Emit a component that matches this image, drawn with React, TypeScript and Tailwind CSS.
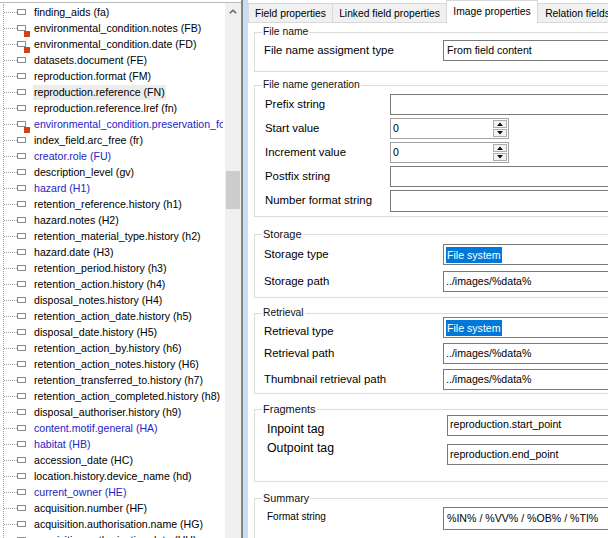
import React from 'react';

type TreeNode = { label: string; blue?: boolean; red?: boolean; hl?: boolean };

const nodes: TreeNode[] = [
  { label: 'finding_aids (fa)' },
  { label: 'environmental_condition.notes (FB)', red: true },
  { label: 'environmental_condition.date (FD)', red: true },
  { label: 'datasets.document (FE)' },
  { label: 'reproduction.format (FM)' },
  { label: 'reproduction.reference (FN)', hl: true },
  { label: 'reproduction.reference.lref (fn)' },
  { label: 'environmental_condition.preservation_form (FO)', blue: true, red: true },
  { label: 'index_field.arc_free (fr)' },
  { label: 'creator.role (FU)', blue: true },
  { label: 'description_level (gv)' },
  { label: 'hazard (H1)', blue: true },
  { label: 'retention_reference.history (h1)' },
  { label: 'hazard.notes (H2)' },
  { label: 'retention_material_type.history (h2)' },
  { label: 'hazard.date (H3)' },
  { label: 'retention_period.history (h3)' },
  { label: 'retention_action.history (h4)' },
  { label: 'disposal_notes.history (H4)' },
  { label: 'retention_action_date.history (h5)' },
  { label: 'disposal_date.history (H5)' },
  { label: 'retention_action_by.history (h6)' },
  { label: 'retention_action_notes.history (H6)' },
  { label: 'retention_transferred_to.history (h7)' },
  { label: 'retention_action_completed.history (h8)' },
  { label: 'disposal_authoriser.history (h9)' },
  { label: 'content.motif.general (HA)', blue: true },
  { label: 'habitat (HB)', blue: true },
  { label: 'accession_date (HC)' },
  { label: 'location.history.device_name (hd)' },
  { label: 'current_owner (HE)', blue: true },
  { label: 'acquisition.number (HF)' },
  { label: 'acquisition.authorisation.name (HG)' },
  { label: 'acquisition.authorisation.date (HH)' },
];

const TreeRow = ({ node }: { node: TreeNode }) => (
  <div className="flex h-[16px] shrink-0 items-center whitespace-nowrap">
    <span className="w-[13px] shrink-0 border-t border-dotted border-[#a0a0a0]" />
    <span className="relative h-[6px] w-[9px] shrink-0 border border-[#8c8c8c]">
      {node.red && <span className="absolute left-[6px] top-[5px] h-[6px] w-[6px] bg-[#d9401a]" />}
    </span>
    <span
      className={`ml-[7px] px-[1px] text-[10.6px] leading-[15px] ${node.hl ? 'bg-[#ececec]' : ''} ${
        node.blue ? 'text-[#2424c4]' : 'text-black'
      }`}
    >
      {node.label}
    </span>
  </div>
);

const Field = ({ children, className = '' }: { children?: React.ReactNode; className?: string }) => (
  <div className={`flex h-[21px] w-[220px] shrink-0 items-center border border-[#7a7a7a] pl-[2px] text-[10.6px] whitespace-nowrap ${className}`}>
    {children}
  </div>
);

const Selected = ({ children }: { children: React.ReactNode }) => (
  <span className="bg-[#0078d7] px-[1px] leading-[16px] text-white">{children}</span>
);

const Spin = ({ value }: { value: string }) => (
  <div className="flex h-[21px] w-[119px] shrink-0 border border-[#a2a2a2] text-[10.6px]">
    <div className="flex flex-1 items-center pl-[2px]">{value}</div>
    <div className="flex w-[15px] flex-col gap-[1px] py-[1px] pr-[1px]">
      <div className="flex flex-1 items-center justify-center border border-[#acacac] bg-[#f3f3f3]">
        <svg width="6" height="4" viewBox="0 0 6 4">
          <path d="M0 4 L3 0.5 L6 4 Z" fill="#111" />
        </svg>
      </div>
      <div className="flex flex-1 items-center justify-center border border-[#acacac] bg-[#f3f3f3]">
        <svg width="6" height="4" viewBox="0 0 6 4">
          <path d="M0 0 L3 3.5 L6 0 Z" fill="#111" />
        </svg>
      </div>
    </div>
  </div>
);

const Group = ({
  title,
  titleCls,
  className,
  children,
}: {
  title: string;
  titleCls: string;
  className: string;
  children: React.ReactNode;
}) => (
  <fieldset className={`ml-[6px] w-[400px] border border-[#dcdcdc] ${className}`}>
    <legend className={`ml-[7px] px-[1px] leading-[14px] text-[#111] ${titleCls}`}>{title}</legend>
    {children}
  </fieldset>
);

const App: React.FC = () => {
  return (
    <div className="flex h-[538px] w-[608px] overflow-hidden bg-white font-['Liberation_Sans',Arial,sans-serif] text-black">
      {/* field tree */}
      <div className="mt-[2px] flex h-[536px] shrink-0 border-t border-[#b9b9b9]">
        <div className="w-[223px] overflow-hidden pt-[1px]">
          <div className="ml-[3px] flex h-full flex-col border-l border-dotted border-[#a0a0a0]">
            {nodes.map((n) => (
              <TreeRow key={n.label} node={n} />
            ))}
          </div>
        </div>
        <div className="ml-[2px] flex w-[16px] flex-col bg-[#f0f0f0]">
          <div className="flex h-[17px] items-center justify-center">
            <svg width="8" height="5" viewBox="0 0 8 5">
              <path d="M0.8 4.3 L4 1.2 L7.2 4.3" fill="none" stroke="#606060" strokeWidth="1.5" />
            </svg>
          </div>
          <div className="mx-auto mt-[151px] h-[38px] w-[14px] bg-[#cdcdcd]" />
        </div>
      </div>

      {/* splitter */}
      <div className="w-[2px] shrink-0 bg-[#858585]" />
      <div className="w-[5px] shrink-0 bg-[#c6dcf7]" />

      {/* properties */}
      <div className="min-w-0 flex-1 overflow-hidden">
        <div className="flex h-[23px] items-end border-b border-[#d9d9d9] text-[10.3px] whitespace-nowrap">
          <div className="flex h-[19px] w-[84px] shrink-0 justify-center border-l border-t border-[#d9d9d9] bg-[#f0f0f0] pt-[4px] leading-[12px]">
            Field properties
          </div>
          <div className="flex h-[19px] w-[114px] shrink-0 justify-center border-l border-t border-[#d9d9d9] bg-[#f0f0f0] pt-[4px] leading-[12px]">
            Linked field properties
          </div>
          <div className="relative z-10 -mb-px flex h-[23px] w-[92px] shrink-0 justify-center border-x border-t border-[#d9d9d9] bg-white pt-[5px] leading-[12px]">
            Image properties
          </div>
          <div className="flex h-[19px] w-[80px] shrink-0 justify-center border-t border-r border-[#d9d9d9] bg-[#f0f0f0] pt-[4px] leading-[12px]">
            Relation fields
          </div>
        </div>

        <Group title="File name" titleCls="text-[10.3px]" className="mt-[2px] pb-[10px]">
          <div className="mt-[1px] flex h-[21px] items-center pl-[9px]">
            <div className="w-[179px] shrink-0 text-[11.4px]">File name assigment type</div>
            <Field className="pl-[3px]">From field content</Field>
          </div>
        </Group>

        <Group title="File name generation" titleCls="text-[10.3px]" className="mt-[6px] pb-[5px]">
          <div className="mt-[2px] flex flex-col gap-[3px] pl-[10px] text-[11.4px]">
            <div className="flex h-[21px] items-center">
              <div className="w-[125px] shrink-0">Prefix string</div>
              <Field />
            </div>
            <div className="flex h-[21px] items-center">
              <div className="w-[125px] shrink-0">Start value</div>
              <Spin value="0" />
            </div>
            <div className="flex h-[21px] items-center">
              <div className="w-[125px] shrink-0">Increment value</div>
              <Spin value="0" />
            </div>
            <div className="flex h-[21px] items-center">
              <div className="w-[125px] shrink-0">Postfix string</div>
              <Field />
            </div>
            <div className="flex h-[21px] items-center">
              <div className="w-[125px] shrink-0">Number format string</div>
              <Field className="h-[22px]" />
            </div>
          </div>
        </Group>

        <Group title="Storage" titleCls="text-[11px]" className="mt-[10px] pb-[5px]">
          <div className="mt-[3px] flex flex-col gap-[6px] pl-[9px] text-[11.4px]">
            <div className="flex h-[21px] items-center">
              <div className="w-[179px] shrink-0">Storage type</div>
              <Field>
                <Selected>File system</Selected>
              </Field>
            </div>
            <div className="flex h-[21px] items-center">
              <div className="w-[179px] shrink-0">Storage path</div>
              <Field>../images/%data%</Field>
            </div>
          </div>
        </Group>

        <Group title="Retrieval" titleCls="text-[10.3px]" className="mt-[8px] pb-[3px]">
          <div className="-mt-[3px] flex flex-col gap-[5px] pl-[9px] text-[11.4px]">
            <div className="flex h-[21px] items-center">
              <div className="mt-[9px] w-[179px] shrink-0">Retrieval type</div>
              <Field>
                <Selected>File system</Selected>
              </Field>
            </div>
            <div className="flex h-[21px] items-center">
              <div className="w-[179px] shrink-0">Retrieval path</div>
              <Field>../images/%data%</Field>
            </div>
            <div className="flex h-[21px] items-center">
              <div className="w-[179px] shrink-0">Thumbnail retrieval path</div>
              <Field>../images/%data%</Field>
            </div>
          </div>
        </Group>

        <Group title="Fragments" titleCls="text-[11px]" className="mt-[8px] pb-[16px]">
          <div className="-mt-[1px] flex flex-col gap-[9px] pl-[12px] text-[12.3px]">
            <div className="flex h-[20px] items-center">
              <div className="mt-[8px] w-[180px] shrink-0">Inpoint tag</div>
              <Field className="h-[20px] pl-[1px]">reproduction.start_point</Field>
            </div>
            <div className="flex h-[21px] items-center">
              <div className="mb-[13px] w-[180px] shrink-0">Outpoint tag</div>
              <Field className="pl-[1px]">reproduction.end_point</Field>
            </div>
          </div>
        </Group>

        <Group title="Summary" titleCls="text-[10.8px]" className="mt-[9px] pb-[20px]">
          <div className="mt-[2px] flex h-[23px] items-center pl-[12px] text-[10px]">
            <div className="mb-[5px] w-[176px] shrink-0">Format string</div>
            <Field className="h-[23px] pl-[3px]">%IN% / %VV% / %OB% / %TI%</Field>
          </div>
        </Group>
      </div>
    </div>
  );
};

export default App;
